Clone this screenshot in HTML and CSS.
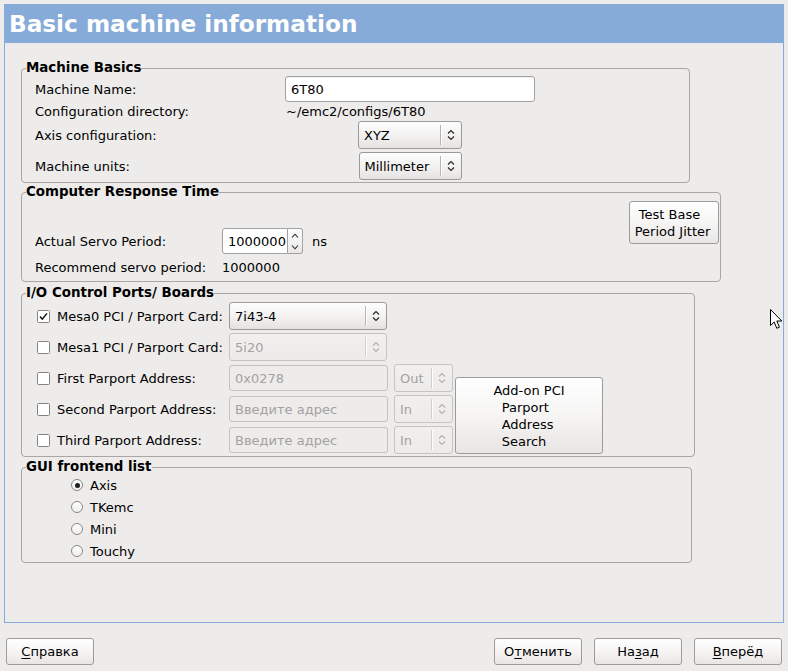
FILE: index.html
```html
<!DOCTYPE html>
<html>
<head>
<meta charset="utf-8">
<title>Basic machine information</title>
<link rel="stylesheet" href="styles.css">
</head>
<body>
<div class="page">
  <div class="assistant">
    <div class="header">Basic machine information</div>
    <div class="content">

      <fieldset class="frame frame-basics">
        <legend>Machine Basics</legend>
        <div class="basics">
          <div class="row row-name">
            <span class="label label-basics">Machine Name:</span>
            <span class="entry entry-name">6T80</span>
          </div>
          <div class="row row-dir">
            <span class="label label-basics">Configuration directory:</span>
            <span class="value-dir">~/emc2/configs/6T80</span>
          </div>
          <div class="row row-axis">
            <span class="label label-basics">Axis configuration:</span>
            <div class="value-cell">
              <div class="combo combo-axis">
                <span class="combo-text">XYZ</span>
                <span class="combo-sep"></span>
                <span class="combo-arrow"><svg width="8" height="12" viewBox="0 0 8 12"><path d="M1 4.5 L4 1.5 L7 4.5 M1 7.5 L4 10.5 L7 7.5" fill="none" stroke="#2a2a2a" stroke-width="1.2"/></svg></span>
              </div>
            </div>
          </div>
          <div class="row row-units">
            <span class="label label-basics">Machine units:</span>
            <div class="value-cell">
              <div class="combo combo-units">
                <span class="combo-text">Millimeter</span>
                <span class="combo-sep"></span>
                <span class="combo-arrow"><svg width="8" height="12" viewBox="0 0 8 12"><path d="M1 4.5 L4 1.5 L7 4.5 M1 7.5 L4 10.5 L7 7.5" fill="none" stroke="#2a2a2a" stroke-width="1.2"/></svg></span>
              </div>
            </div>
          </div>
        </div>
      </fieldset>

      <fieldset class="frame frame-crt">
        <legend>Computer Response Time</legend>
        <div class="crt-body">
          <div class="crt-rows">
            <div class="row row-crt">
              <span class="label label-crt">Actual Servo Period:</span>
              <div class="spin">
                <span class="spin-entry">1000000</span>
                <span class="spin-buttons">
                  <span class="spin-half"><svg width="8" height="5" viewBox="0 0 8 5"><path d="M1 4.5 L4 1.2 L7 4.5" fill="none" stroke="#2a2a2a" stroke-width="1.1"/></svg></span>
                  <span class="spin-half"><svg width="8" height="5" viewBox="0 0 8 5"><path d="M1 0.5 L4 3.8 L7 0.5" fill="none" stroke="#2a2a2a" stroke-width="1.1"/></svg></span>
                </span>
              </div>
              <span class="unit">ns</span>
            </div>
            <div class="row row-crt">
              <span class="label label-crt">Recommend servo period:</span>
              <span>1000000</span>
            </div>
          </div>
          <button class="btn btn-jitter"><span class="btn-lines">&nbsp;Test Base<br>Period Jitter</span></button>
        </div>
      </fieldset>

      <fieldset class="frame frame-io">
        <legend>I/O Control Ports/ Boards</legend>
        <div class="io-grid">
          <label class="check-label"><span class="check"><svg width="13" height="13" viewBox="0 0 13 13"><rect x="0.5" y="0.5" width="12" height="12" rx="1" fill="#fff" stroke="#858381"/><path d="M3 6.6 L5.3 9.2 L10 3.4" fill="none" stroke="#111" stroke-width="1.5"/></svg></span>Mesa0 PCI / Parport Card:</label>
          <div class="combo combo-mesa">
            <span class="combo-text">7i43-4</span>
            <span class="combo-sep"></span>
            <span class="combo-arrow"><svg width="8" height="12" viewBox="0 0 8 12"><path d="M1 4.5 L4 1.5 L7 4.5 M1 7.5 L4 10.5 L7 7.5" fill="none" stroke="#2a2a2a" stroke-width="1.2"/></svg></span>
          </div>

          <label class="check-label"><span class="check"><svg width="13" height="13" viewBox="0 0 13 13"><rect x="0.5" y="0.5" width="12" height="12" rx="1" fill="#fff" stroke="#858381"/></svg></span>Mesa1 PCI / Parport Card:</label>
          <div class="combo combo-mesa disabled">
            <span class="combo-text">5i20</span>
            <span class="combo-sep"></span>
            <span class="combo-arrow"><svg width="8" height="12" viewBox="0 0 8 12"><path d="M1 4.5 L4 1.5 L7 4.5 M1 7.5 L4 10.5 L7 7.5" fill="none" stroke="#b4b2b0" stroke-width="1.2"/></svg></span>
          </div>

          <label class="check-label row3"><span class="check"><svg width="13" height="13" viewBox="0 0 13 13"><rect x="0.5" y="0.5" width="12" height="12" rx="1" fill="#fff" stroke="#858381"/></svg></span>First Parport Address:</label>
          <span class="entry entry-addr disabled">0x0278</span>
          <div class="combo combo-dir disabled">
            <span class="combo-text">Out</span>
            <span class="combo-sep"></span>
            <span class="combo-arrow"><svg width="8" height="12" viewBox="0 0 8 12"><path d="M1 4.5 L4 1.5 L7 4.5 M1 7.5 L4 10.5 L7 7.5" fill="none" stroke="#b4b2b0" stroke-width="1.2"/></svg></span>
          </div>
          <button class="btn btn-search"><span class="btn-lines">Add-on PCI<br>&nbsp;&nbsp;Parport<br>&nbsp;&nbsp;Address<br>&nbsp;&nbsp;Search</span></button>

          <label class="check-label"><span class="check"><svg width="13" height="13" viewBox="0 0 13 13"><rect x="0.5" y="0.5" width="12" height="12" rx="1" fill="#fff" stroke="#858381"/></svg></span>Second Parport Address:</label>
          <span class="entry entry-addr disabled">Введите адрес</span>
          <div class="combo combo-dir disabled">
            <span class="combo-text">In</span>
            <span class="combo-sep"></span>
            <span class="combo-arrow"><svg width="8" height="12" viewBox="0 0 8 12"><path d="M1 4.5 L4 1.5 L7 4.5 M1 7.5 L4 10.5 L7 7.5" fill="none" stroke="#b4b2b0" stroke-width="1.2"/></svg></span>
          </div>

          <label class="check-label"><span class="check"><svg width="13" height="13" viewBox="0 0 13 13"><rect x="0.5" y="0.5" width="12" height="12" rx="1" fill="#fff" stroke="#858381"/></svg></span>Third Parport Address:</label>
          <span class="entry entry-addr disabled">Введите адрес</span>
          <div class="combo combo-dir disabled">
            <span class="combo-text">In</span>
            <span class="combo-sep"></span>
            <span class="combo-arrow"><svg width="8" height="12" viewBox="0 0 8 12"><path d="M1 4.5 L4 1.5 L7 4.5 M1 7.5 L4 10.5 L7 7.5" fill="none" stroke="#b4b2b0" stroke-width="1.2"/></svg></span>
          </div>
        </div>
      </fieldset>

      <fieldset class="frame frame-gui">
        <legend>GUI frontend list</legend>
        <div class="radio-list">
          <label class="radio-row"><span class="radio checked"></span>Axis</label>
          <label class="radio-row"><span class="radio"></span>TKemc</label>
          <label class="radio-row"><span class="radio"></span>Mini</label>
          <label class="radio-row"><span class="radio"></span>Touchy</label>
        </div>
      </fieldset>

    </div>
  </div>

  <div class="button-bar">
    <button class="btn btn-bar"><span class="mn">С</span>правка</button>
    <div class="bar-right">
      <button class="btn btn-bar">О<span class="mn">т</span>менить</button>
      <button class="btn btn-bar">На<span class="mn">з</span>ад</button>
      <button class="btn btn-bar"><span class="mn">В</span>перёд</button>
    </div>
  </div>
</div>

<svg class="cursor" width="13" height="21" viewBox="0 0 13 21"><path d="M0.5 0.5 L0.5 16.5 L4.2 13 L6.8 19.3 L9.4 18.2 L6.8 12 L11.8 12 Z" fill="#fff" stroke="#000" stroke-width="1" stroke-linejoin="miter"/></svg>
</body>
</html>
```
FILE: styles.css
```css
* { box-sizing: border-box; }
html, body { margin: 0; padding: 0; }
body {
  width: 788px;
  height: 671px;
  overflow: hidden;
  position: relative;
  background: #edeceb;
  font-family: "DejaVu Sans", sans-serif;
  font-size: 13px;
  color: #000;
}
.page { padding: 4px; }

.assistant {
  width: 780px;
  height: 619px;
  border: 1px solid #86abd9;
  background: #edeceb;
}
.header {
  height: 38px;
  line-height: 38px;
  background: #86abd9;
  color: #fff;
  font-weight: bold;
  font-size: 23.2px;
  padding-left: 4px;
  white-space: nowrap;
}
.content {
  padding: 18px 0 0 16px;
}

/* frames */
.frame {
  margin: 0;
  padding: 0;
  min-width: 0;
  border: 1px solid #a9a7a5;
  border-radius: 4px;
}
.frame legend {
  font-weight: bold;
  font-size: 13.4px;
  line-height: 14px;
  padding: 0;
  margin-left: 4px;
}
.frame-basics { width: 669px; }
.frame-crt { width: 700px; margin-top: 2px; }
.frame-io { width: 674px; margin-top: 4px; }
.frame-gui { width: 671px; margin-top: 3px; }

.row { display: flex; align-items: center; }
.label { white-space: nowrap; }

/* machine basics */
.basics { padding: 1px 0 2px 13px; }
.label-basics { width: 250px; }
.row-name { height: 26px; }
.row-dir { height: 19px; }
.row-axis { height: 28px; }
.row-units { height: 28px; margin-top: 3px; }
.value-dir { padding-left: 1px; }
.value-cell { width: 250px; display: flex; justify-content: center; }

/* entries */
.entry {
  display: flex;
  align-items: center;
  height: 26px;
  padding: 0 5px;
  background: #fff;
  border: 1px solid #a3a1a0;
  border-radius: 3px;
  box-shadow: inset 0 1px 1px rgba(0,0,0,0.06);
  white-space: nowrap;
}
.entry-name { width: 250px; }
.entry.disabled {
  background: #edeceb;
  border-color: #c4c2c0;
  color: #a4a2a0;
  box-shadow: none;
}
.entry-addr { width: 159px; }

/* combo boxes */
.combo {
  display: flex;
  align-items: center;
  height: 28px;
  border: 1px solid #9c9a98;
  border-radius: 3px;
  background: linear-gradient(#fdfdfd, #f3f2f1 50%, #e4e3e2);
  white-space: nowrap;
}
.combo-text { flex: 1; padding-left: 5px; }
.combo-sep {
  width: 1px;
  height: 20px;
  background: #b7b5b3;
  box-shadow: 1px 0 0 #ffffff;
}
.combo-arrow {
  width: 20px;
  display: flex;
  align-items: center;
  justify-content: center;
}
.combo-arrow svg { display: block; }
.combo-axis { width: 104px; }
.combo-units { width: 103px; }
.combo-mesa { width: 158px; }
.combo-dir { width: 59px; }
.combo.disabled {
  background: linear-gradient(#f1f0ef, #ecebea);
  border-color: #c6c4c2;
  color: #a4a2a0;
}
.combo.disabled .combo-sep { background: #d1cfcd; }

/* computer response time */
.crt-body {
  display: flex;
  justify-content: space-between;
  align-items: flex-start;
  padding: 0 1px 1px 13px;
}
.crt-rows { padding-top: 29px; }
.row-crt { height: 26px; }
.label-crt { width: 187px; }
.spin { display: flex; height: 26px; }
.spin-entry {
  width: 66px;
  height: 26px;
  display: flex;
  align-items: center;
  padding-left: 5px;
  background: #fff;
  border: 1px solid #a3a1a0;
  border-radius: 3px 0 0 3px;
}
.spin-buttons {
  width: 15px;
  height: 26px;
  display: flex;
  flex-direction: column;
  border: 1px solid #a3a1a0;
  border-left: none;
  border-radius: 0 3px 3px 0;
  background: linear-gradient(#fdfdfd, #e9e8e7);
}
.spin-half {
  flex: 1;
  display: flex;
  align-items: center;
  justify-content: center;
}
.spin-half svg { display: block; }
.unit { margin-left: 9px; }

/* buttons */
.btn {
  font: inherit;
  color: #000;
  padding: 0;
  margin: 0;
  border: 1px solid #9d9b99;
  border-radius: 3px;
  background: linear-gradient(#ffffff, #f6f5f4 50%, #e7e6e5);
  display: flex;
  align-items: center;
  justify-content: center;
}
.btn-lines { display: block; text-align: left; line-height: 17px; white-space: nowrap; }
.btn-jitter { width: 90px; height: 43px; margin-top: 2px; }
.btn-jitter .btn-lines { margin-right: 3px; }

/* io grid */
.io-grid {
  display: grid;
  grid-template-columns: 192px 165px 61px 147px;
  grid-auto-rows: 28px;
  row-gap: 3px;
  align-items: center;
  justify-items: start;
  margin: 2px 0 2px 15px;
}
.check-label {
  grid-column: 1;
  display: flex;
  align-items: center;
  white-space: nowrap;
}
.check { width: 13px; height: 13px; margin-right: 7px; display: block; }
.check svg { display: block; }
.combo-mesa { grid-column: 2; }
.entry-addr { grid-column: 2; }
.combo-dir { grid-column: 3; }
.btn-search {
  grid-column: 4;
  grid-row: 3 / 6;
  align-self: end;
  width: 148px;
  height: 77px;
}

/* radios */
.radio-list { padding-left: 49px; }
.radio-row {
  display: flex;
  align-items: center;
  height: 22px;
}
.radio {
  width: 12px;
  height: 12px;
  border-radius: 50%;
  border: 1px solid #8a8886;
  background: linear-gradient(#ffffff, #f0efee);
  margin-right: 7px;
  position: relative;
}
.radio.checked::after {
  content: "";
  position: absolute;
  left: 2.5px;
  top: 2.5px;
  width: 5px;
  height: 5px;
  border-radius: 50%;
  background: #1e1e1e;
}

/* bottom bar */
.button-bar {
  display: flex;
  justify-content: space-between;
  margin-top: 15px;
  padding: 0 2px;
}
.bar-right { display: flex; gap: 12px; }
.btn-bar { width: 88px; height: 27px; }
.mn { text-decoration: underline; text-underline-offset: 2px; }

.cursor { position: absolute; left: 770px; top: 309px; }
```
